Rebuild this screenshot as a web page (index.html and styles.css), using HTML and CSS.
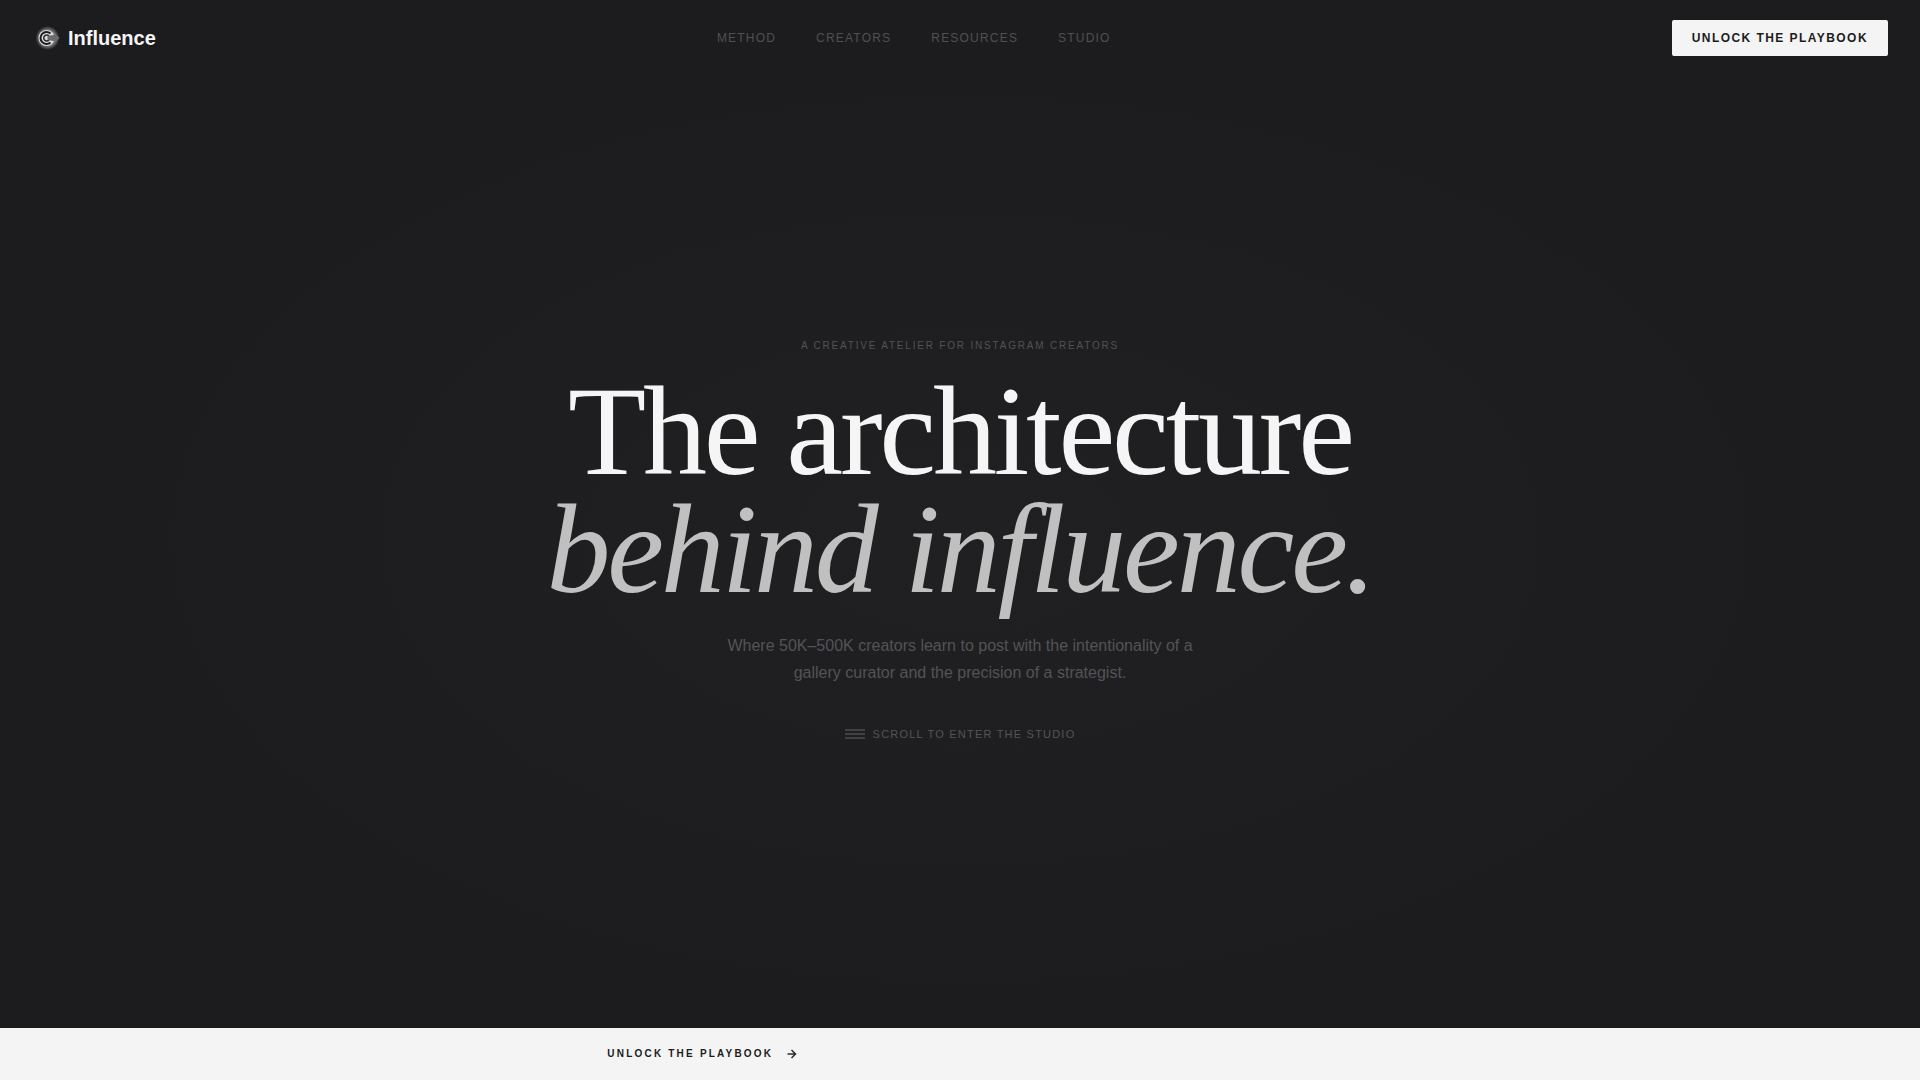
FILE: index.html
```html
<!DOCTYPE html>
<html lang="en">
<head>
    <meta charset="UTF-8">
    <meta name="viewport" content="width=device-width, initial-scale=1.0">
    <title>Influence</title>
    <link rel="stylesheet" href="styles.css">
</head>
<body>
    <header class="header">
        <a class="brand" href="#">
            <svg class="brand-mark" viewBox="0 0 24 24" aria-hidden="true">
                <defs>
                    <radialGradient id="halo">
                        <stop offset="0.6" stop-color="#8a8a8a"/>
                        <stop offset="1" stop-color="#8a8a8a" stop-opacity="0"/>
                    </radialGradient>
                </defs>
                <circle cx="11.500" cy="12" r="12" fill="url(#halo)"/>
                <circle cx="10.500" cy="12" r="8" fill="#dcdcdc"/>
                <path d="M14.500 7.500A6 6 0 1 0 14.500 16.500" fill="none" stroke="#1c1c1e" stroke-width="2"/>
                <path d="M13 10A3 3 0 1 0 13 14" fill="none" stroke="#2a2a2c" stroke-width="1.500"/>
                <path d="M11.500 10L20 8.500L23.500 12L20 15.500L11.500 14Z" fill="#6c6c6e"/>
            </svg>
            Influence
        </a>
        <nav class="nav">
            <a href="#method">Method</a>
            <a href="#creators">Creators</a>
            <a href="#resources">Resources</a>
            <a href="#studio">Studio</a>
        </nav>
        <button class="header-button" type="button">Unlock the Playbook</button>
    </header>

    <main class="hero">
        <p class="eyebrow">A creative atelier for Instagram creators</p>
        <h1 class="title">The architecture<br><em>behind influence.</em></h1>
        <p class="intro">Where 50K–500K creators learn to post with the intentionality of a gallery curator and the precision of a strategist.</p>
        <a class="scroll" href="#method">
            <svg class="scroll-icon" viewBox="0 0 20 12" aria-hidden="true">
                <path d="M0 2H20M0 6H20M0 10H20"/>
            </svg>
            Scroll to enter the studio
        </a>
    </main>

    <footer class="bar">
        <a class="bar-link" href="#playbook">
            Unlock the Playbook
            <svg class="bar-arrow" viewBox="0 0 14 14" aria-hidden="true">
                <path d="M2.500 7H10.500M6.500 3L10.500 7L6.500 11"/>
            </svg>
        </a>
    </footer>
</body>
</html>
```
FILE: styles.css
```css
* {
    box-sizing: border-box;
}

body {
    margin: 0;
    min-height: 100vh;
    display: flex;
    flex-direction: column;
    font-family: "Liberation Sans", Arial, sans-serif;
    color: #f5f5f6;
    background: radial-gradient(ellipse at center, #202022 0%, #1c1c1e 70%);
}

a {
    color: inherit;
    text-decoration: none;
}

.header {
    display: flex;
    align-items: center;
    justify-content: space-between;
    padding: 20px 32px;
}

.brand {
    display: flex;
    align-items: center;
    gap: 8px;
    padding-left: 4px;
    font-size: 20px;
    line-height: 24px;
    font-weight: bold;
}

.brand-mark {
    width: 24px;
    height: 24px;
}

.nav {
    display: flex;
    gap: 40px;
    font-size: 12px;
    line-height: 16px;
    letter-spacing: 0.1em;
    text-transform: uppercase;
    color: #505052;
}

.header-button {
    height: 36px;
    padding: 0 20px;
    border: 0;
    border-radius: 2px;
    background: #f4f4f5;
    color: #1c1c1e;
    font: bold 12px "Liberation Sans", Arial, sans-serif;
    letter-spacing: 0.12em;
    text-transform: uppercase;
    cursor: pointer;
}

.hero {
    flex: 1;
    display: flex;
    flex-direction: column;
    align-items: center;
    justify-content: center;
    text-align: center;
    padding-bottom: 24px;
}

.eyebrow {
    margin: 0 0 18px;
    font-size: 10px;
    line-height: 16px;
    letter-spacing: 0.18em;
    text-transform: uppercase;
    color: #525254;
}

.title {
    margin: 0 0 24px;
    font-family: "Liberation Serif", "Times New Roman", serif;
    font-size: 128px;
    line-height: 118px;
    font-weight: normal;
    letter-spacing: -0.025em;
}

.title em {
    color: #c0c0c1;
}

.intro {
    max-width: 480px;
    margin: 0 0 40px;
    font-size: 16px;
    line-height: 27px;
    color: #535355;
}

.scroll {
    display: flex;
    align-items: center;
    gap: 8px;
    font-size: 11px;
    line-height: 16px;
    letter-spacing: 0.11em;
    text-transform: uppercase;
    color: #545456;
}

.scroll-icon {
    width: 20px;
    height: 12px;
    fill: none;
    stroke: #414143;
    stroke-width: 2px;
}

.bar {
    padding: 18px 32px;
    background: #f4f4f4;
    color: #1c1c1e;
}

.bar-link {
    display: flex;
    align-items: center;
    gap: 12px;
    width: max-content;
    margin-left: 31%;
    font-size: 10px;
    line-height: 16px;
    font-weight: bold;
    letter-spacing: 0.22em;
    text-transform: uppercase;
}

.bar-arrow {
    width: 14px;
    height: 14px;
    fill: none;
    stroke: #2c2c2e;
    stroke-width: 1.5px;
}
```
